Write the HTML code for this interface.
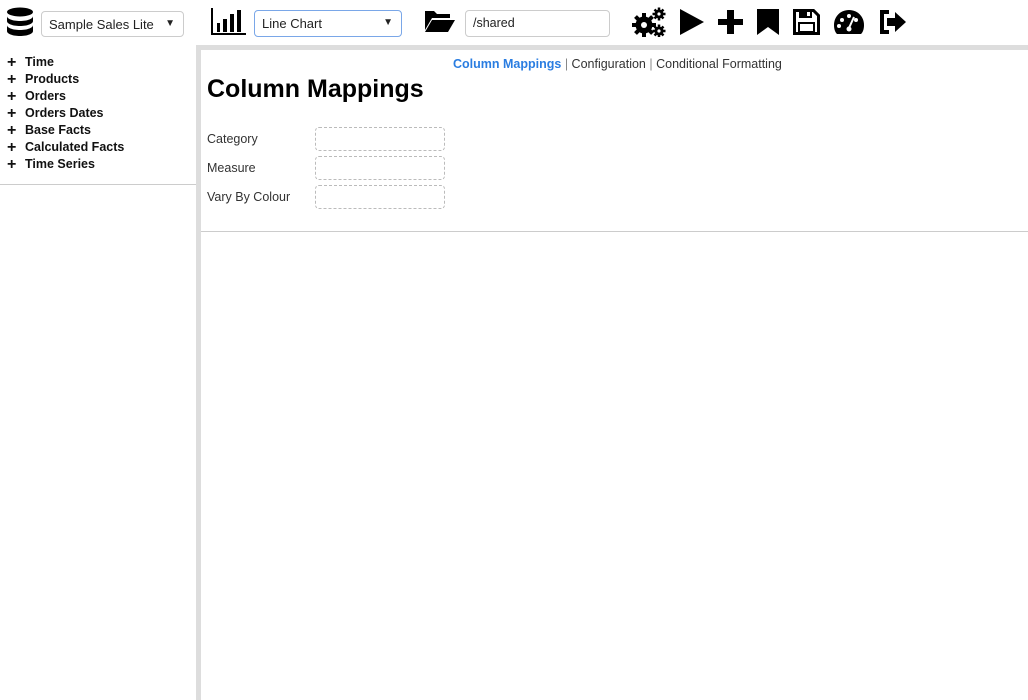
<!DOCTYPE html>
<html><head><meta charset="utf-8"><style>
*{box-sizing:border-box;margin:0;padding:0}
body{width:1028px;height:700px;overflow:hidden;background:#fff;font-family:"Liberation Sans",sans-serif;color:#222;position:relative}
.abs{position:absolute}
.sel{position:absolute;height:26px;border:1px solid #ccc;border-radius:4px;font-size:13px;padding:5px 0 0 7px;color:#222;background:#fff}
.sel .ar{position:absolute;right:8px;top:6px;font-size:10px}
.tree{position:absolute;left:7px;top:54px;font-size:12.5px;font-weight:bold;color:#111}
.tree div{height:17px;line-height:17px;overflow:visible;white-space:nowrap}
.tree div span{display:inline-block;width:18px;font-size:16px;font-weight:900;line-height:17px;height:17px;vertical-align:top}
.lbl{position:absolute;left:207px;font-size:12.5px;color:#333}
.box{position:absolute;left:315px;width:130px;height:24px;border:1px dashed #bbb;border-radius:4px}
</style></head><body>
<svg class="abs" style="left:6px;top:7px" width="28" height="30" viewBox="0 0 28 30">
<ellipse cx="14" cy="5" rx="13" ry="4.5" fill="#000"/>
<path d="M1 9c0 3 6 5 13 5s13-2 13-5v5c0 3-6 5-13 5S1 17 1 14z" fill="#000"/>
<path d="M1 18c0 3 6 5 13 5s13-2 13-5v6c0 3-6 5-13 5S1 27 1 24z" fill="#000"/>
</svg>
<div class="sel" style="left:41px;top:11px;width:143px">Sample Sales Lite<span class="ar">▼</span></div>
<svg class="abs" style="left:211px;top:8px" width="36" height="27" viewBox="0 0 36 27">
<path d="M1 0v26h34" stroke="#000" stroke-width="2" fill="none"/>
<rect x="6" y="15" width="3" height="9" fill="#000"/><rect x="12" y="11" width="4" height="13" fill="#000"/>
<rect x="19" y="6" width="4" height="18" fill="#000"/><rect x="26" y="2" width="4" height="22" fill="#000"/>
</svg>
<div class="sel" style="left:254px;top:10px;width:148px;height:27px;border-color:#7aa7e8">Line Chart<span class="ar">▼</span></div>
<svg class="abs" style="left:424px;top:9px" width="32" height="24" viewBox="0 0 32 24">
<path d="M1 2h9l3 3h13v4H8L1 21z" fill="#000"/><path d="M8 11h23l-7 12H1z" fill="#000"/>
</svg>
<div class="sel" style="left:465px;top:10px;width:145px;height:27px;font-size:12.5px">/shared</div>
<svg class="abs" style="left:632px;top:7px" width="34" height="30" viewBox="0 0 34 30">
<g fill="#000">
<circle cx="12" cy="18" r="8.5"/>
<g stroke="#000" stroke-width="4"><path d="M12 6v24M0 18h24M3.5 9.5l17 17M3.5 26.5l17-17"/></g>
<circle cx="27" cy="7" r="4.5"/><g stroke="#000" stroke-width="2.5"><path d="M27 0.5v13M20.5 7h13M22.5 2.5l9 9M22.5 11.5l9-9"/></g>
<circle cx="27" cy="24" r="4.5"/><g stroke="#000" stroke-width="2.5"><path d="M27 17.5v13M20.5 24h13M22.5 19.5l9 9M22.5 28.5l9-9"/></g>
</g>
<circle cx="12" cy="18" r="3" fill="#fff"/><circle cx="27" cy="7" r="1.6" fill="#fff"/><circle cx="27" cy="24" r="1.6" fill="#fff"/>
</svg>
<svg class="abs" style="left:679px;top:9px" width="26" height="26" viewBox="0 0 26 26"><path d="M1 0l24 13L1 26z" fill="#000"/></svg>
<svg class="abs" style="left:718px;top:10px" width="25" height="24" viewBox="0 0 25 24"><path d="M9 0h7v9h9v6h-9v9H9v-9H0V9h9z" fill="#000"/></svg>
<svg class="abs" style="left:757px;top:9px" width="22" height="26" viewBox="0 0 22 26"><path d="M0 0h22v26l-11-8-11 8z" fill="#000"/></svg>
<svg class="abs" style="left:793px;top:9px" width="27" height="26" viewBox="0 0 27 26"><path d="M1.5 1.5h19l5 5v18h-24z" fill="none" stroke="#000" stroke-width="3"/><rect x="6" y="2" width="13" height="7" fill="#000"/><rect x="14" y="3" width="3" height="4" fill="#fff"/><rect x="6" y="14" width="15" height="9" fill="none" stroke="#000" stroke-width="2"/></svg>
<svg class="abs" style="left:833px;top:9px" width="32" height="26" viewBox="0 0 32 26"><path d="M16 1C7 1 1 8 1 16c0 4 1 7 3 9h24c2-2 3-5 3-9C31 8 25 1 16 1z" fill="#000"/><circle cx="9" cy="11" r="2" fill="#fff"/><circle cx="16" cy="7" r="2" fill="#fff"/><circle cx="23" cy="11" r="2" fill="#fff"/><circle cx="6" cy="17" r="2" fill="#fff"/><path d="M21 8l-5 11" stroke="#fff" stroke-width="2"/><circle cx="16" cy="20" r="2.5" fill="#fff"/></svg>
<svg class="abs" style="left:879px;top:10px" width="28" height="24" viewBox="0 0 28 24"><path d="M10 2H3v20h7" stroke="#000" stroke-width="4" fill="none"/><path d="M8 8h8V2l11 10-11 10v-6H8z" fill="#000"/></svg>
<div class="abs" style="left:196px;top:45px;width:832px;height:5px;background:#ddd"></div>
<div class="abs" style="left:196px;top:45px;width:5px;height:655px;background:#ddd"></div>
<div class="abs" style="left:0;top:184px;width:196px;height:1px;background:#ccc"></div>
<div class="abs" style="left:201px;top:231px;width:827px;height:1px;background:#ccc"></div>
<div class="tree">
<div><span>+</span>Time</div><div><span>+</span>Products</div><div><span>+</span>Orders</div><div><span>+</span>Orders Dates</div><div><span>+</span>Base Facts</div><div><span>+</span>Calculated Facts</div><div><span>+</span>Time Series</div>
</div>
<div class="abs" style="left:453px;top:57px;font-size:12.5px;color:#333;white-space:nowrap"><b style="color:#2a7de1">Column Mappings</b> <span style="color:#888">|</span> Configuration <span style="color:#888">|</span> Conditional Formatting</div>
<div class="abs" style="left:207px;top:75px;font-size:25px;font-weight:bold;color:#000">Column Mappings</div>
<div class="lbl" style="top:132px">Category</div><div class="box" style="top:127px"></div>
<div class="lbl" style="top:161px">Measure</div><div class="box" style="top:156px"></div>
<div class="lbl" style="top:190px">Vary By Colour</div><div class="box" style="top:185px"></div>
</body></html>
